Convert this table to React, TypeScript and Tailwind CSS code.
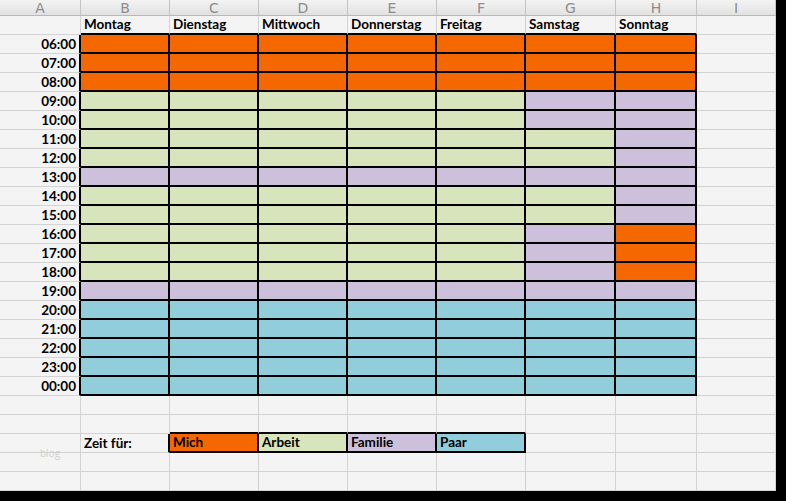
import React from "react";

type C = "o" | "g" | "p" | "b" | null;

const cols = ["A", "B", "C", "D", "E", "F", "G", "H", "I"];
const days = ["Montag", "Dienstag", "Mittwoch", "Donnerstag", "Freitag", "Samstag", "Sonntag"];
const times = [
  "06:00", "07:00", "08:00", "09:00", "10:00", "11:00", "12:00", "13:00", "14:00", "15:00",
  "16:00", "17:00", "18:00", "19:00", "20:00", "21:00", "22:00", "23:00", "00:00",
];

// row patterns for B..H
const pat: Record<string, string> = {
  "06:00": "ooooooo",
  "07:00": "ooooooo",
  "08:00": "ooooooo",
  "09:00": "gggggpp",
  "10:00": "gggggpp",
  "11:00": "ggggggp",
  "12:00": "ggggggp",
  "13:00": "ppppppp",
  "14:00": "ggggggp",
  "15:00": "ggggggp",
  "16:00": "gggggpo",
  "17:00": "gggggpo",
  "18:00": "gggggpo",
  "19:00": "ppppppp",
  "20:00": "bbbbbbb",
  "21:00": "bbbbbbb",
  "22:00": "bbbbbbb",
  "23:00": "bbbbbbb",
  "00:00": "bbbbbbb",
};

type Cell = { text?: string; color: C; align?: "right" | "left" };

const rows: Cell[][] = [];
rows.push([{ color: null }, ...days.map((d) => ({ text: d, color: null as C })), { color: null }]);
times.forEach((t) => {
  const p = pat[t];
  rows.push([
    { text: t, color: null, align: "right" },
    ...p.split("").map((ch) => ({ color: ch as C })),
    { color: null },
  ]);
});
const empty = (): Cell[] => cols.map(() => ({ color: null }));
rows.push(empty());
rows.push(empty());
rows.push([
  { color: null },
  { text: "Zeit für:", color: null },
  { text: "Mich", color: "o" },
  { text: "Arbeit", color: "g" },
  { text: "Familie", color: "p" },
  { text: "Paar", color: "b" },
  { color: null },
  { color: null },
  { color: null },
]);
rows.push(empty());
rows.push(empty());

const bgOf = (c: C) =>
  c === "o"
    ? "bg-[#f56700]"
    : c === "g"
    ? "bg-[#d7e4bc]"
    : c === "p"
    ? "bg-[#ccc0da]"
    : c === "b"
    ? "bg-[#92cddc]"
    : "bg-[#f4f4f4]";

const colored = (r: number, c: number) => {
  const row = rows[r];
  if (!row) return false;
  const cell = row[c];
  if (!cell) return false;
  return cell.color !== null;
};

export default function App() {
  return (
    <div className="w-[786px] h-[501px] bg-black overflow-hidden">
      <div className="relative w-[776px] h-[491px] bg-[#f4f4f4] overflow-hidden">
        <div className="grid grid-cols-[81px_89px_89px_89px_89px_89px_90px_81px_79px] grid-rows-[16px_repeat(25,19px)]">
          {cols.map((l) => (
            <div
              key={l}
              className="flex items-center justify-center bg-gradient-to-b from-[#f3f3f3] to-[#e2e2e2] border-r border-r-[#c4c4c4] border-b border-b-[#b8b8b8] text-[14px] leading-none text-[#8c8c8c]"
              style={{ fontFamily: '"DejaVu Sans", sans-serif' }}
            >
              {l}
            </div>
          ))}
          {rows.map((row, r) =>
            row.map((cell, c) => {
              const rb = colored(r, c) || colored(r, c + 1);
              const bb = colored(r, c) || colored(r + 1, c);
              return (
                <div
                  key={`${r}-${c}`}
                  className={`${bgOf(cell.color)} ${
                    rb ? "border-r-2 border-r-black" : "border-r border-r-[#d3d3d3]"
                  } ${
                    bb ? "border-b-2 border-b-black" : "border-b border-b-[#d3d3d3]"
                  } flex items-end overflow-hidden whitespace-nowrap font-bold text-[13.5px] leading-[17px] text-black ${
                    cell.align === "right" ? "justify-end pr-[3px]" : "justify-start pl-[3px]"
                  }`}
                  style={{ fontFamily: 'Lato, "Open Sans", sans-serif' }}
                >
                  {cell.text ?? ""}
                </div>
              );
            })
          )}
        </div>
        <div
          className="absolute left-[40px] top-[448px] text-[10px] leading-none text-[#cfcfcf]"
          style={{ fontFamily: '"Open Sans", sans-serif' }}
        >
          blog
        </div>
      </div>
    </div>
  );
}
